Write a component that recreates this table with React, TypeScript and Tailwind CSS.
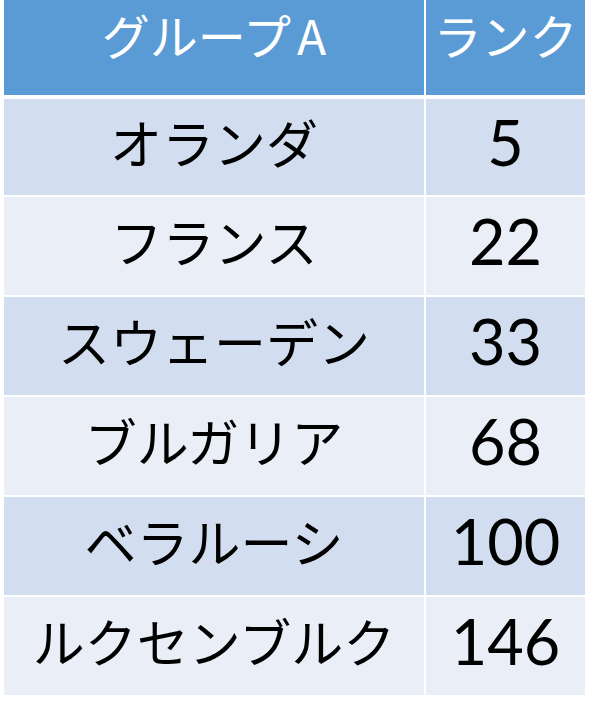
import React from 'react'

const ROWS = [
  { name: 'オランダ', rank: '5' },
  { name: 'フランス', rank: '22' },
  { name: 'スウェーデン', rank: '33' },
  { name: 'ブルガリア', rank: '68' },
  { name: 'ベラルーシ', rank: '100' },
  { name: 'ルクセンブルク', rank: '146' },
]

const jp = "font-['Noto_Sans_CJK_JP',sans-serif]"
const num = "font-['Lato','Noto_Sans',sans-serif]"

export default function App() {
  return (
    <div className="w-[589px] h-[703px] bg-white px-[4px]">
      <div className="grid grid-cols-[420px_159px] gap-x-[2px] h-[95px] bg-white">
        <div className={`bg-[#5b9bd5] text-center pt-[6px] text-white text-[48px] leading-[1.2] ${jp}`}>
          グループ<span className="ml-[6px]">A</span>
        </div>
        <div className={`bg-[#5b9bd5] text-center pt-[6px] text-white text-[48px] leading-[1.2] whitespace-nowrap ${jp}`}>
          ランク
        </div>
      </div>
      <div className="flex flex-col gap-y-[2px] mt-[4px]">
        {ROWS.map((row, i) => {
          const bg = i % 2 === 0 ? 'bg-[#d2deef]' : 'bg-[#eaeff7]'
          return (
            <div
              key={row.name}
              className={`grid grid-cols-[420px_159px] gap-x-[2px] ${i === 0 ? 'h-[96px]' : 'h-[98px]'}`}
            >
              <div className={`${bg} flex items-center justify-center pb-[10px] text-black text-[52px] leading-[1.2] ${jp}`}>
                {row.name}
              </div>
              <div className={`${bg} flex items-center justify-center pb-[10px] text-black text-[63px] leading-[1.2] ${num}`}>
                {row.rank}
              </div>
            </div>
          )
        })}
      </div>
    </div>
  )
}
